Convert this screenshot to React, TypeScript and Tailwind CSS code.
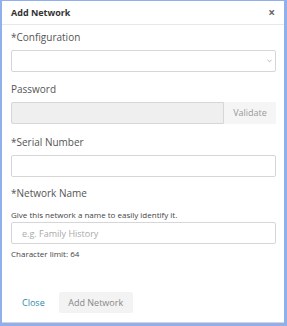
import { useState } from "react";

export default function App() {
  const [name, setName] = useState("");

  return (
    <div className="h-[326px] w-[287px] border-l-2 border-r-[3px] border-t border-b-[3px] border-[#8fb0ea] bg-white" style={{ fontFamily: '"Open Sans", sans-serif' }}>
      <div className="flex h-full flex-col border-b border-[#d5d5d5]">
        <div className="flex h-[24px] items-center justify-between border-b border-[#e8e8e8] pl-[9px] pr-[9px]">
          <h1 className="text-[9px] font-bold text-[#333]">Add Network</h1>
          <button className="text-[12px] font-bold leading-none text-[#666]">×</button>
        </div>

        <div className="flex flex-col pl-[9px] pr-[8px] pt-[5px] text-[#555]">
          <label className="text-[10px] leading-[14px]">*Configuration</label>
          <div className="mt-[6px] flex h-[22px] items-center justify-end rounded-[2px] border border-[#d6d6d6] pr-[3px]">
            <svg width="5" height="4" viewBox="0 0 6 4" fill="none" stroke="#aaa" strokeWidth="1">
              <path d="M0.5 0.5 L3 3 L5.5 0.5" />
            </svg>
          </div>

          <label className="mt-[10px] text-[10px] leading-[14px]">Password</label>
          <div className="mt-[6px] flex h-[22px]">
            <input type="password" disabled className="h-full min-w-0 flex-1 rounded-l-[2px] border border-[#d6d6d6] bg-[#efefef]" />
            <button className="h-full w-[52px] bg-[#f5f5f5] text-[9px] text-[#999]">Validate</button>
          </div>

          <label className="mt-[11px] text-[10px] leading-[14px]">*Serial Number</label>
          <input className="mt-[6px] h-[22px] rounded-[2px] border border-[#d6d6d6]" />

          <label className="mt-[9px] text-[10px] leading-[14px]">*Network Name</label>
          <p className="mt-[9px] text-[8px] leading-[12px] text-[#444]">Give this network a name to easily identify it.</p>
          <input
            value={name}
            onChange={(e) => setName(e.target.value)}
            placeholder="e.g. Family History"
            maxLength={64}
            className="mt-[1px] h-[22px] rounded-[2px] border border-[#d6d6d6] px-[10px] text-[9px] placeholder:text-[#aaa]"
          />
          <p className="mt-[4px] text-[8px] leading-[12px] text-[#444]">Character limit: 64</p>
        </div>

        <div className="mt-auto flex items-center gap-[14px] pb-[9px] pl-[20px]">
          <button className="text-[9px] text-[#2e8aa8]">Close</button>
          <button className="h-[21px] w-[74px] rounded-[2px] bg-[#f3f3f3] text-[9px] text-[#888]">Add Network</button>
        </div>
      </div>
    </div>
  );
}
